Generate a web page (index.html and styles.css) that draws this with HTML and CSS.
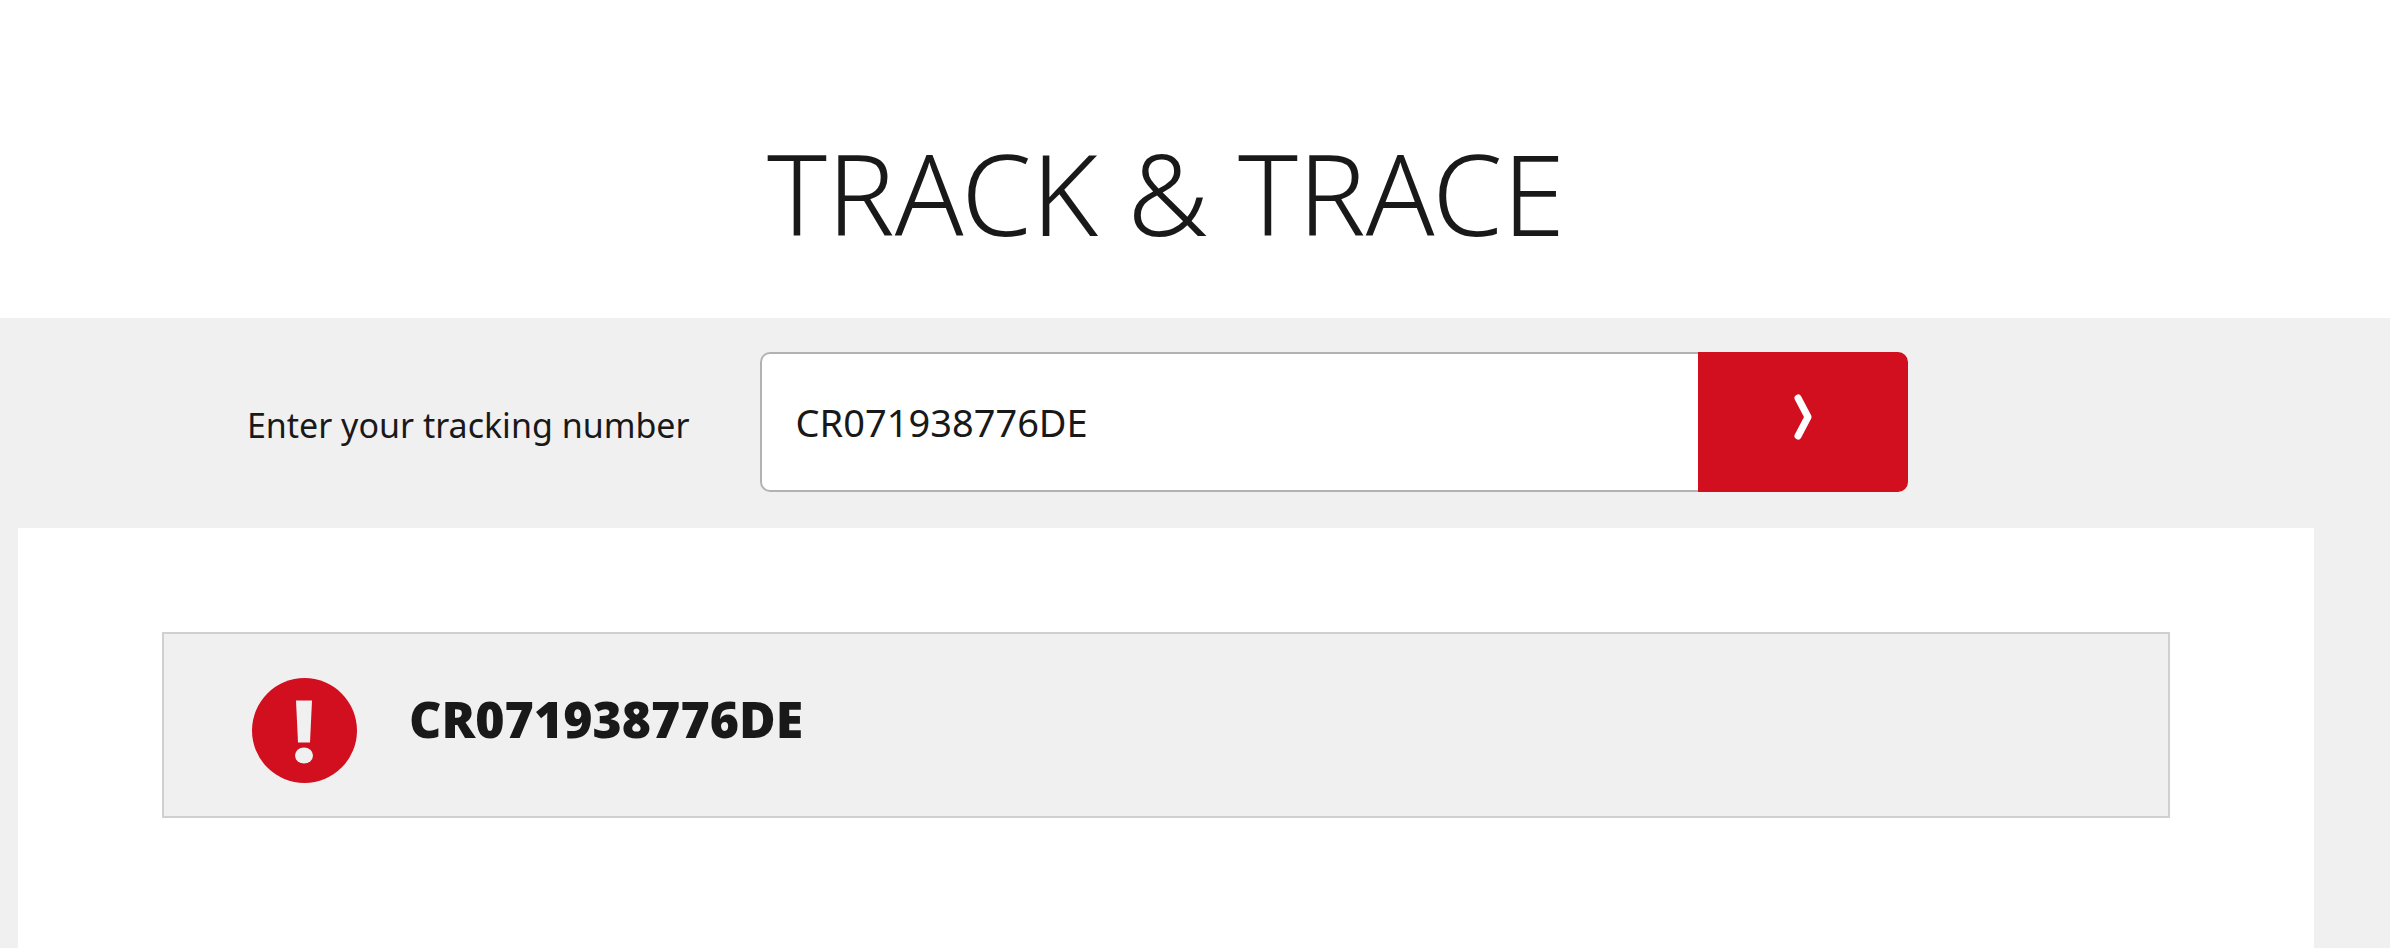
FILE: index.html
```html
<!DOCTYPE html>
<html lang="en">
<head>
    <meta charset="UTF-8">
    <meta name="viewport" content="width=device-width, initial-scale=1.0">
    <title>Track &amp; Trace</title>
    <link rel="stylesheet" href="styles.css">
</head>
<body>

<header class="page-header">
    <h1>TRACK &amp; TRACE</h1>
</header>

<main class="content">
    <form class="tracking-form">
        <label for="trackingNumber">Enter your tracking number</label>
        <div class="search-box">
            <input type="text" id="trackingNumber" name="trackingNumber" value="CR071938776DE">
            <button type="submit" aria-label="Search">
                <svg class="arrow" viewBox="0 0 18 46" aria-hidden="true">
                    <path d="M4 4 L14 23 L4 42"/>
                </svg>
            </button>
        </div>
    </form>

    <section class="results">
        <div class="alert">
            <svg class="alert-icon" viewBox="0 0 105 105" aria-hidden="true">
                <circle class="alert-circle" cx="52.5" cy="52.5" r="52.5"/>
                <path class="alert-mark" d="M44 22.5 H60 L58 64.5 H46 Z"/>
                <ellipse class="alert-mark" cx="52" cy="77.5" rx="9" ry="8"/>
            </svg>
            <h2>CR071938776DE</h2>
        </div>
    </section>
</main>

</body>
</html>
```
FILE: styles.css
```css
* {
    box-sizing: border-box;
}
body {
    display: flex;
    flex-direction: column;
    min-height: 100vh;
    margin: 0;
    padding-right: 4px;
    font-family: "Noto Sans", sans-serif;
    color: #191919;
    background-color: #fff;
}
.page-header {
    padding: 124px 76px 58px 18px;
    text-align: center;
}
h1 {
    margin: 0;
    font-size: 113px;
    font-weight: 300;
    line-height: 136px;
}
.content {
    display: flex;
    flex: 1;
    flex-direction: column;
    padding: 0 76px 0 18px;
    background-color: #f0f0f0;
}
.tracking-form {
    display: grid;
    grid-template-columns: 32.3% 50%;
    align-items: center;
    padding: 34px 0 36px;
}
label {
    padding: 6px 70px 0 0;
    font-size: 34px;
    text-align: right;
}
.search-box {
    display: flex;
    height: 140px;
}
input[type="text"] {
    flex: 1;
    min-width: 0;
    padding: 0 34px;
    font-family: inherit;
    font-size: 38px;
    color: #191919;
    background-color: #fff;
    border: 2px solid #b2b2b2;
    border-right: none;
    border-radius: 10px 0 0 10px;
}
button {
    width: 210px;
    padding: 0 0 10px;
    background-color: #d20f1e;
    border: none;
    border-radius: 0 10px 10px 0;
    cursor: pointer;
}
.arrow {
    display: block;
    width: 18px;
    height: 46px;
    margin: 0 auto;
    fill: none;
    stroke: #fff;
    stroke-width: 7;
    stroke-linecap: round;
    stroke-linejoin: round;
}
.results {
    flex: 1;
    padding: 104px 144px;
    background-color: #fff;
}
.alert {
    display: flex;
    gap: 52px;
    padding: 44px 88px 33px;
    background-color: #f0f0f0;
    border: 2px solid #d0d0d0;
}
.alert-icon {
    flex: none;
    width: 105px;
    height: 105px;
}
.alert-circle {
    fill: #d20f1e;
}
.alert-mark {
    fill: #f0f0f0;
}
h2 {
    margin: 0;
    font-size: 50px;
    font-weight: 900;
    line-height: 82px;
}
```
